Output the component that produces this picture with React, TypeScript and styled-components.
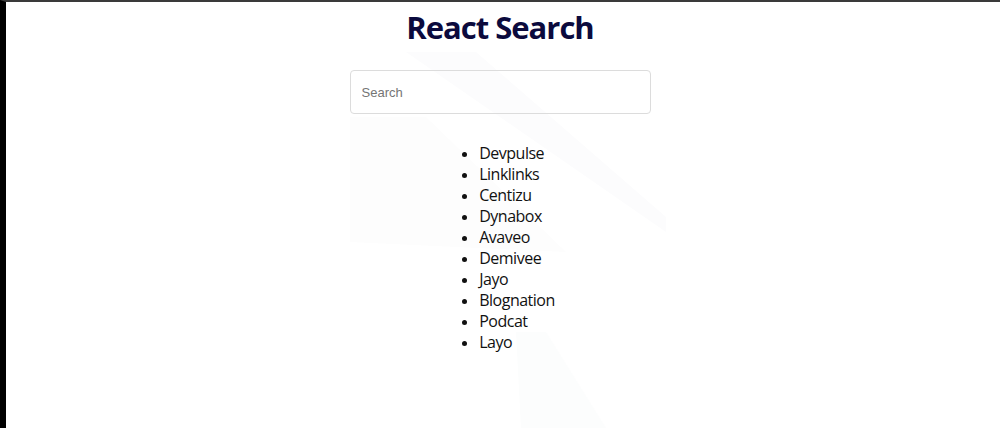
import React, { useState } from "react";
import styled, { createGlobalStyle } from "styled-components";

const companies = [
  "Devpulse",
  "Linklinks",
  "Centizu",
  "Dynabox",
  "Avaveo",
  "Demivee",
  "Jayo",
  "Blognation",
  "Podcat",
  "Layo",
];

const GlobalStyle = createGlobalStyle`
  html, body {
    margin: 0;
    padding: 0;
    background: #ffffff;
  }
`;

const Frame = styled.div`
  position: relative;
  box-sizing: border-box;
  min-height: 428px;
  border-top: 2px solid #3a3a3a;
  border-left: 6px solid #000000;
  overflow: hidden;
  font-family: "Open Sans", "Noto Sans", sans-serif;
`;

const Watermark = styled.svg`
  position: absolute;
  top: 0;
  left: 0;
  width: 100%;
  height: 100%;
  pointer-events: none;
`;

const Content = styled.main`
  position: relative;
  display: flex;
  flex-direction: column;
  align-items: center;
  padding-right: 6px;
`;

const Title = styled.h1`
  margin: 5px 0 0;
  font-size: 31px;
  line-height: 41px;
  letter-spacing: -1px;
  font-weight: 700;
  color: #0b0a3d;
`;

const SearchInput = styled.input`
  box-sizing: border-box;
  width: 301px;
  height: 44px;
  margin-top: 22px;
  padding: 0 11px;
  border: 1px solid #dcdcdc;
  border-radius: 4px;
  background: transparent;
  font-family: "Liberation Sans", Arial, sans-serif;
  font-size: 13px;
  color: #222;
  outline: none;

  &::placeholder {
    color: #757575;
  }
`;

const List = styled.ul`
  margin: 29px 6px 0 0;
  padding-left: 40px;
  font-size: 16px;
  line-height: 21px;
  letter-spacing: -0.5px;
  color: #111;
`;

const Item = styled.li`
  &::marker {
    font-size: 15px;
  }
`;

export default function App() {
  const [query, setQuery] = useState("");
  const shown = companies.filter((c) =>
    c.toLowerCase().includes(query.toLowerCase())
  );

  return (
    <>
      <GlobalStyle />
      <Frame>
        <Watermark viewBox="0 0 994 426" preserveAspectRatio="none">
          <polygon points="400,50 470,50 660,215 660,230" fill="#fcfcfd" />
          <polygon points="344,115 420,115 560,250 344,240" fill="#fdfdfd" />
          <polygon points="510,330 540,330 600,426 515,426" fill="#fcfdfd" />
        </Watermark>
        <Content>
          <Title>React Search</Title>
          <SearchInput
            placeholder="Search"
            value={query}
            onChange={(e) => setQuery(e.target.value)}
          />
          <List>
            {shown.map((name) => (
              <Item key={name}>{name}</Item>
            ))}
          </List>
        </Content>
      </Frame>
    </>
  );
}
